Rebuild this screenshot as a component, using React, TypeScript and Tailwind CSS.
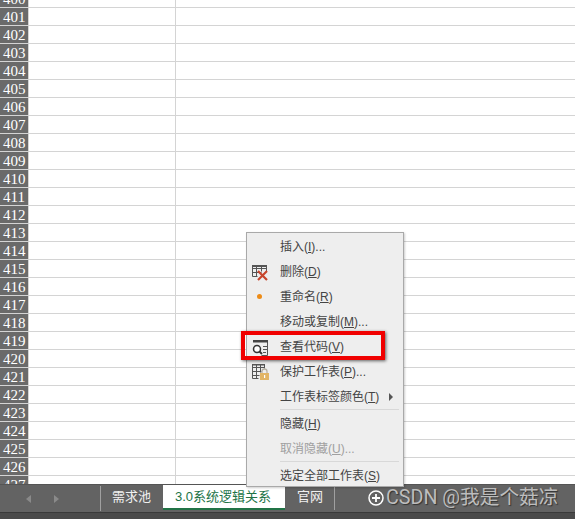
const rows = Array.from({ length: 28 }, (_, i) => 400 + i);

type Item = {
  pre?: string;
  key?: string;
  post?: string;
  icon?: string;
  arrow?: boolean;
  disabled?: boolean;
  sep?: boolean;
};

const items: Item[] = [
  { pre: "插入(", key: "I", post: ")..." },
  { pre: "删除(", key: "D", post: ")", icon: "delete" },
  { pre: "重命名(", key: "R", post: ")", icon: "dot" },
  { pre: "移动或复制(", key: "M", post: ")..." },
  { pre: "查看代码(", key: "V", post: ")", icon: "code" },
  { pre: "保护工作表(", key: "P", post: ")...", icon: "lock" },
  { pre: "工作表标签颜色(", key: "T", post: ")", arrow: true },
  { sep: true },
  { pre: "隐藏(", key: "H", post: ")" },
  { pre: "取消隐藏(", key: "U", post: ")...", disabled: true },
  { sep: true },
  { pre: "选定全部工作表(", key: "S", post: ")" },
];

const MenuIcon = ({ name }: { name?: string }) => {
  if (name === "delete")
    return (
      <svg width="20" height="20" viewBox="0 0 20 20">
        <path d="M3.500 3.500h14M3.500 6.500h14M3.500 10.500h9M3.500 14.500h5M3.500 3.500v11M7.500 3.500v11M12.500 3.500v6M17.500 3.500v6" stroke="#555" fill="none" />
        <path d="M3 3h15v2H3z" fill="#555" />
        <path d="M9 9l9 9M18 9l-9 9" stroke="#c8452c" strokeWidth="2.200" />
      </svg>
    );
  if (name === "dot") return <div className="w-[5px] h-[5px] rounded-full bg-[#ed8b16]" />;
  if (name === "code")
    return (
      <svg width="20" height="20" viewBox="0 0 20 20">
        <path d="M4.500 3.500h14v15h-6" stroke="#555" fill="none" />
        <path d="M4 3h15v2.500H4z" fill="#444" />
        <path d="M14 9.500h4M14 12.500h4M14 15.500h3" stroke="#555" />
        <circle cx="8" cy="12" r="3.500" stroke="#333" strokeWidth="1.500" fill="#fff" />
        <path d="M10.500 14.500l2.500 2.500" stroke="#333" strokeWidth="1.800" />
      </svg>
    );
  if (name === "lock")
    return (
      <svg width="20" height="20" viewBox="0 0 20 20">
        <path d="M3.500 2.500h12M3.500 5.500h12M3.500 9.500h9M3.500 13.500h7M3.500 16.500h6M3.500 2.500v14M7.500 2.500v14M11.500 2.500v8M15.500 2.500v4" stroke="#555" fill="none" />
        <path d="M3 2h13v1.500H3z" fill="#555" />
        <path d="M13 11V9.500a2.500 2.500 0 0 1 5 0V11" stroke="#b8b2a4" strokeWidth="1.300" fill="none" />
        <rect x="11" y="11" width="9" height="7" fill="#e2b565" />
        <rect x="15" y="13" width="1.200" height="3" fill="#fff" />
      </svg>
    );
  return null;
};

export default function App() {
  return (
    <div className="relative w-[575px] h-[519px] overflow-hidden bg-white font-['Liberation_Sans','Noto_Sans_CJK_SC',sans-serif]">
      <div className="-mt-[10px] h-[494px] overflow-hidden">
        {rows.map((row) => (
          <div key={row} className="flex h-[18px] border-b border-[#d4d4d4]">
            <div className="w-[29px] shrink-0 bg-[#6a6a6a] border-r border-[#d4d4d4] pl-[3px] text-[15px] leading-[19px] text-white font-['Liberation_Serif',serif]">
              {row}
            </div>
            <div className="w-[147px] shrink-0 border-r border-[#d4d4d4]" />
          </div>
        ))}
      </div>

      <div className="flex h-[28px] bg-[#636363] border-t border-[#555] text-[13px] text-[#f0f0f0]">
        <div className="flex w-[101px] items-center justify-end gap-[23px] pr-[41px] border-r border-[#a0a0a0] my-[1px]">
          <span className="w-0 h-0 border-y-[4px] border-y-transparent border-r-[5px] border-r-[#8a8a8a]" />
          <span className="w-0 h-0 border-y-[4px] border-y-transparent border-l-[5px] border-l-[#8a8a8a]" />
        </div>
        <div className="w-[62px] pl-[11px] leading-[24px]">需求池</div>
        <div className="w-[122px] h-[25px] bg-white border-b-[2px] border-[#217346] pl-[12px] text-[#217346] leading-[23px]">
          3.0系统逻辑关系
        </div>
        <div className="w-[50px] h-[25px] pl-[12px] leading-[24px] border-r border-[#a0a0a0]">官网</div>
        <div className="flex items-center pl-[33px] gap-[2px] -mt-[1px]">
          <svg width="16" height="16" viewBox="0 0 16 16">
            <circle cx="8" cy="8" r="7" stroke="#fff" strokeWidth="1.500" fill="none" />
            <path d="M4 8h8M8 4v8" stroke="#fff" strokeWidth="1.800" />
          </svg>
          <span className="text-[19.7px] text-[#bdbdbd] [text-shadow:1px_1px_1px_#333] font-['Roboto','Noto_Sans_CJK_SC',sans-serif] whitespace-nowrap">
            CSDN @我是个菇凉
          </span>
        </div>
      </div>
      <div className="h-[7px] bg-[#4a4a4a] border-t border-[#3a3a3a]" />

      <div className="absolute left-[246px] top-[232px] w-[158px] h-[255px] bg-[#eeeeee] border border-[#a9a9a9] py-[1px] text-[12px] text-[#444] shadow-[1px_1px_2px_rgba(0,0,0,0.2)]">
        {items.map((item, i) =>
          item.sep ? (
            <div key={i} className="ml-[33px] mr-[4px] mb-[1px] h-px bg-[#d8d8d8]" />
          ) : (
            <div key={i} className="relative flex h-[25px] items-center">
              <div className="flex w-[24px] mr-[9px] items-center justify-center">
                <MenuIcon name={item.icon} />
              </div>
              <span className={item.disabled ? "text-[#a0a0a0]" : ""}>
                {item.pre}
                <span className="underline">{item.key}</span>
                {item.post}
              </span>
              {item.arrow && (
                <span className="absolute right-[10px] w-0 h-0 border-y-[4px] border-y-transparent border-l-[4px] border-l-[#555]" />
              )}
            </div>
          ),
        )}
      </div>

      <div className="absolute left-[241px] top-[331px] w-[144px] h-[29px] border-[4px] border-[#f00000] shadow-[1px_1px_3px_rgba(0,0,0,0.6)]" />
    </div>
  );
}
